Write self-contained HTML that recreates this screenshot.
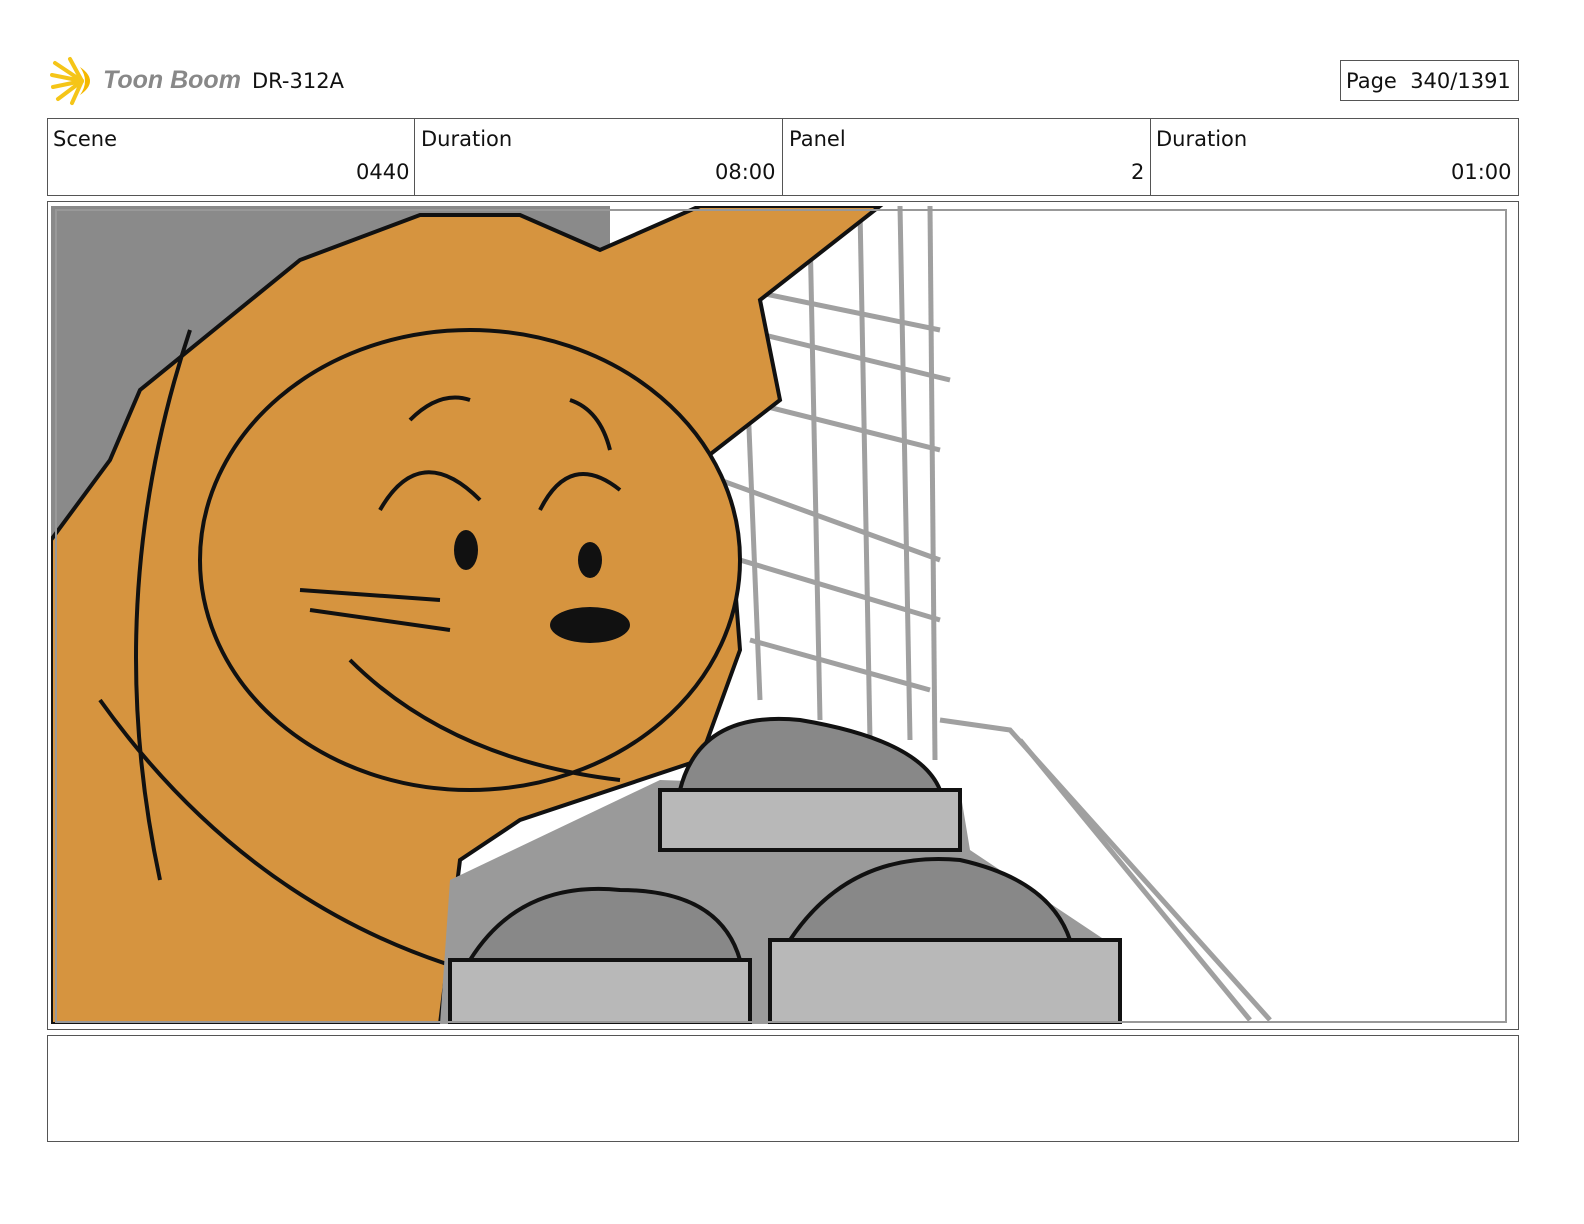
<!DOCTYPE html>
<html><head><meta charset="utf-8"><style>
body{margin:0;width:1584px;height:1224px;background:#fff;position:relative;font-family:"DejaVu Sans","Liberation Sans",sans-serif;color:#111;overflow:hidden}
.a{position:absolute}
.box{position:absolute;border:1px solid #555;box-sizing:border-box}
.t{position:absolute;font-size:21px}
</style></head><body>
<svg class="a" style="left:50px;top:55px" width="55" height="52" viewBox="0 0 55 52">
<g stroke="#f5c518" stroke-width="4" stroke-linecap="round">
<line x1="32" y1="26" x2="5" y2="8"/><line x1="32" y1="26" x2="2" y2="20"/><line x1="32" y1="26" x2="3" y2="32"/><line x1="32" y1="26" x2="8" y2="44"/><line x1="32" y1="26" x2="20" y2="4"/><line x1="32" y1="26" x2="22" y2="48"/></g>
<path d="M30 12 Q50 26 30 40 Q40 26 30 12Z" fill="#f5b800"/>
</svg>
<div class="t" style="left:103px;top:66px;font-family:'Liberation Sans',sans-serif;font-style:italic;font-weight:bold;color:#888;font-size:25px">Toon Boom</div>
<div class="t" style="left:252px;top:69px">DR-312A</div>
<div class="box" style="left:1340px;top:60px;width:179px;height:41px"></div>
<div class="t" style="left:1346px;top:69px">Page&nbsp; 340/1391</div>
<div class="box" style="left:47px;top:118px;width:1472px;height:78px"></div>
<div class="a" style="left:414px;top:118px;width:1px;height:78px;background:#555"></div>
<div class="a" style="left:782px;top:118px;width:1px;height:78px;background:#555"></div>
<div class="a" style="left:1150px;top:118px;width:1px;height:78px;background:#555"></div>
<div class="t" style="left:53px;top:127px">Scene</div>
<div class="t" style="left:356px;top:160px">0440</div>
<div class="t" style="left:421px;top:127px">Duration</div>
<div class="t" style="left:715px;top:160px">08:00</div>
<div class="t" style="left:789px;top:127px">Panel</div>
<div class="t" style="left:1131px;top:160px">2</div>
<div class="t" style="left:1156px;top:127px">Duration</div>
<div class="t" style="left:1451px;top:160px">01:00</div>
<div class="box" style="left:47px;top:201px;width:1472px;height:829px"></div>
<svg class="a" style="left:51px;top:206px" width="1456" height="818" viewBox="51 206 1456 818">
<rect x="51" y="206" width="1456" height="818" fill="#fff"/>
<polygon points="51,206 610,206 610,320 540,300 300,260 51,540" fill="#8a8a8a"/>
<g stroke="#a0a0a0" stroke-width="5" fill="none">
<path d="M600 260 L940 330"/><path d="M620 300 L950 380"/><path d="M700 390 L940 450"/><path d="M720 480 L940 560"/><path d="M740 560 L940 620"/><path d="M750 640 L930 690"/>
<path d="M700 206 L720 700"/><path d="M740 206 L760 700"/><path d="M810 230 L820 720"/><path d="M860 210 L870 740"/><path d="M900 206 L910 740"/><path d="M930 206 L935 760"/>
<path d="M940 720 L1010 730 L1270 1020"/><path d="M1020 740 L1250 1020"/>
</g>
<path d="M51 540 L110 460 L140 390 L300 260 L420 215 L520 215 L600 250 L700 206 L880 206 L760 300 L780 400 L690 470 L730 520 L740 650 L700 760 L520 820 L460 860 L440 1024 L51 1024Z" fill="#d6943f" stroke="#111" stroke-width="4"/>
<ellipse cx="470" cy="560" rx="270" ry="230" fill="#d6943f" stroke="#111" stroke-width="4"/>
<g fill="#111"><ellipse cx="466" cy="550" rx="12" ry="20"/><ellipse cx="590" cy="560" rx="12" ry="18"/><ellipse cx="590" cy="625" rx="40" ry="18"/></g>
<g stroke="#111" stroke-width="4" fill="none">
<path d="M410 420 Q440 390 470 400"/><path d="M570 400 Q600 410 610 450"/><path d="M380 510 Q420 440 480 500"/><path d="M540 510 Q570 450 620 490"/>
<path d="M350 660 Q450 760 620 780"/><path d="M300 590 L440 600"/><path d="M310 610 L450 630"/><path d="M100 700 Q300 980 640 1000"/><path d="M190 330 Q100 600 160 880"/>
</g>
<path d="M450 880 L660 780 L960 790 L970 850 L1120 950 L1120 1024 L440 1024Z" fill="#9a9a9a"/>
<g fill="#b8b8b8" stroke="#111" stroke-width="4">
<rect x="660" y="790" width="300" height="60"/><rect x="450" y="960" width="300" height="64"/><rect x="770" y="940" width="350" height="84"/>
</g>
<g fill="#888" stroke="#111" stroke-width="4">
<path d="M680 790 Q700 710 800 720 Q920 740 940 790Z"/><path d="M470 960 Q520 880 620 890 Q720 890 740 960Z"/><path d="M790 940 Q850 850 960 860 Q1050 880 1070 940Z"/>
</g>
<rect x="56" y="210" width="1450" height="812" fill="none" stroke="#999" stroke-width="2"/>
</svg>
<div class="box" style="left:47px;top:1035px;width:1472px;height:107px"></div>
</body></html>
